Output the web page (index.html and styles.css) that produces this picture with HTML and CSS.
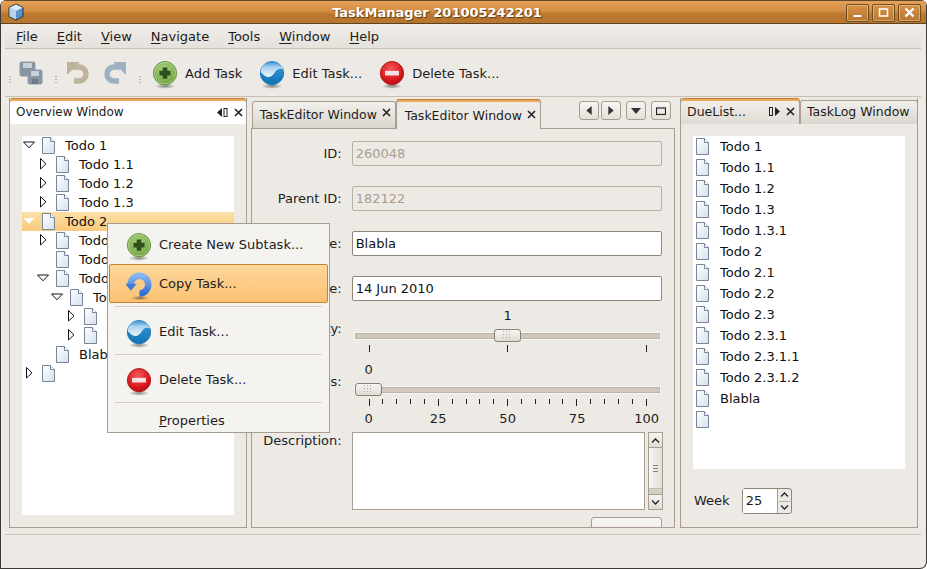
FILE: index.html
```html
<!DOCTYPE html>
<html lang="en">
<head>
<meta charset="utf-8">
<title>TaskManager 201005242201</title>
<link rel="stylesheet" href="styles.css">
</head>
<body>
<svg class="defs" aria-hidden="true">
  <defs>
    <radialGradient id="gGreen" cx="0.45" cy="0.35" r="0.75"><stop offset="0" stop-color="#a9d080"/><stop offset="0.6" stop-color="#86b455"/><stop offset="1" stop-color="#5b8f33"/></radialGradient>
    <radialGradient id="gRed" cx="0.45" cy="0.3" r="0.8"><stop offset="0" stop-color="#f2595b"/><stop offset="0.6" stop-color="#dc1a1e"/><stop offset="1" stop-color="#a50d10"/></radialGradient>
    <linearGradient id="gBlue" x1="0" y1="0" x2="0" y2="1"><stop offset="0" stop-color="#3d97d8"/><stop offset="0.35" stop-color="#a9d0ee"/><stop offset="1" stop-color="#f0f6fb"/></linearGradient>
    <linearGradient id="gBlueBase" x1="0" y1="0" x2="0" y2="1"><stop offset="0" stop-color="#3f9bd8"/><stop offset="1" stop-color="#0d73b4"/></linearGradient>
    <radialGradient id="gShadow"><stop offset="0" stop-color="#000" stop-opacity=".45"/><stop offset="1" stop-color="#000" stop-opacity="0"/></radialGradient>
    <linearGradient id="gDoc" x1="0" y1="0" x2="1" y2="1"><stop offset="0" stop-color="#fff"/><stop offset="1" stop-color="#d5e0ee"/></linearGradient>
    <linearGradient id="gCopy" x1="0" y1="0" x2="0" y2="1"><stop offset="0" stop-color="#86b6f0"/><stop offset="1" stop-color="#2f6fd6"/></linearGradient>
    <symbol id="i-add" viewBox="0 0 28 32">
      <ellipse cx="14" cy="28" rx="11" ry="3" fill="url(#gShadow)"/>
      <circle cx="14" cy="14" r="12.5" fill="url(#gGreen)" stroke="#5f8f3b"/>
      <circle cx="14" cy="14" r="11.4" fill="none" stroke="#c4e0a4" stroke-opacity=".7"/>
      <path d="M11.5 8h5v3.5H20v5h-3.5V20h-5v-3.5H8v-5h3.5z" fill="#2f4f1c"/>
    </symbol>
    <symbol id="i-edit" viewBox="0 0 28 32">
      <ellipse cx="14" cy="28" rx="11" ry="3" fill="url(#gShadow)"/>
      <circle cx="14" cy="14" r="12.5" fill="url(#gBlueBase)" stroke="#1676b5"/>
      <path d="M2 13C2 6 7.500 2 14 2c6 0 11 3.500 12 8-3.500-1.500-6.500-.5-8.500 2.500C15 16.500 12 19 8.500 18 5.500 17 4 14.500 2 13z" fill="url(#gBlue)"/>
    </symbol>
    <symbol id="i-del" viewBox="0 0 28 32">
      <ellipse cx="14" cy="28" rx="11" ry="3" fill="url(#gShadow)"/>
      <circle cx="14" cy="14" r="12.5" fill="url(#gRed)" stroke="#a81417"/>
      <rect x="6.5" y="11.5" width="15" height="5" fill="#f6e2e2"/>
    </symbol>
    <symbol id="i-copy" viewBox="0 0 28 32">
      <ellipse cx="15" cy="29" rx="10" ry="2.5" fill="url(#gShadow)"/>
      <path d="M5 14.500A9.500 9.500 0 1 1 14.500 24" fill="none" stroke="url(#gCopy)" stroke-width="7"/>
      <path d="M-1 13.500h12.500L5.200 21z" fill="#3c7cdc"/>
    </symbol>
    <symbol id="i-doc" viewBox="0 0 13 17">
      <path d="M.5.500H8.500L12.500 4.500V16.500H.5z" fill="url(#gDoc)" stroke="#76859a"/>
      <path d="M8.500.500V4.500H12.500" fill="#fff" stroke="#76859a"/>
    </symbol>
    <symbol id="a-down" viewBox="0 0 20 19">
      <path d="M1.500 6H12.500L7 11.800z" fill="#fff" stroke="#111"/>
    </symbol>
    <symbol id="a-down-w" viewBox="0 0 20 19">
      <path d="M1.500 6H12.500L7 11.800z" fill="#fff"/>
    </symbol>
    <symbol id="a-right" viewBox="0 0 20 19">
      <path d="M4.500 3.500V14L10 8.800z" fill="#fff" stroke="#111"/>
    </symbol>
  </defs>
</svg>

<div class="window">
  <header class="titlebar">
    <svg class="appicon" viewBox="0 0 16 18"><path d="M8 1l7 3.500v9L8 17l-7-3.500v-9z" fill="#5f93cc" stroke="#26303a"/><path d="M1.500 4.800L8 8l6.500-3.200L8 1.600z" fill="#dbe9f7"/><path d="M8 8v8.500l-6.500-3.300V4.800z" fill="#b8d3ee"/></svg>
    <span class="title">TaskManager 201005242201</span>
    <div class="wm-buttons">
      <span class="wm-btn"><svg viewBox="0 0 21 16"><rect x="6.500" y="10" width="8" height="2" fill="#fff"/></svg></span>
      <span class="wm-btn"><svg viewBox="0 0 21 16"><rect x="6.500" y="4" width="8" height="7" fill="none" stroke="#fff" stroke-width="1.500"/></svg></span>
      <span class="wm-btn"><svg viewBox="0 0 21 16"><path d="M6.500 3.500l8 8M14.500 3.500l-8 8" stroke="#fff" stroke-width="2.400"/></svg></span>
    </div>
  </header>

  <nav class="menubar">
    <span><u>F</u>ile</span><span><u>E</u>dit</span><span><u>V</u>iew</span><span><u>N</u>avigate</span><span><u>T</u>ools</span><span><u>W</u>indow</span><span><u>H</u>elp</span>
  </nav>

  <div class="toolbar">
    <i class="grip"></i>
    <svg class="tool-save" viewBox="0 0 24 24"><g fill="#8795a3" stroke="#8b98a5"><rect x="1" y="1" width="15" height="14" rx="1.500"/><rect x="9" y="9" width="14" height="14" rx="1.500"/></g><rect x="4" y="2" width="9" height="5" fill="#c9d0d7"/><rect x="12" y="10" width="8" height="5" fill="#c9d0d7"/><rect x="13" y="18" width="6" height="5" fill="#6d7a86"/></svg>
    <i class="grip"></i>
    <svg class="tool-hist" viewBox="0 0 24 24"><path d="M6 6h7a7 7 0 0 1 0 14H8" fill="none" stroke="#bfb29f" stroke-width="5.500"/><path d="M1 1h13L1 14z" fill="#bfb29f"/></svg>
    <svg class="tool-hist tool-redo" viewBox="0 0 24 24"><path d="M18 6h-7a7 7 0 0 0 0 14h5" fill="none" stroke="#9db1c0" stroke-width="5.500"/><path d="M23 1H10l13 13z" fill="#9db1c0"/></svg>
    <i class="grip"></i>
    <div class="tool t-add"><svg class="ic"><use href="#i-add"/></svg><span>Add Task</span></div>
    <div class="tool t-edit"><svg class="ic"><use href="#i-edit"/></svg><span>Edit Task...</span></div>
    <div class="tool t-del"><svg class="ic"><use href="#i-del"/></svg><span>Delete Task...</span></div>
  </div>

  <main class="workspace">
    <section class="panel panel-left">
      <div class="view-head">
        <span>Overview Window</span>
        <svg class="mini" viewBox="0 0 11 9"><path d="M0 4.500L5 0v9z" fill="#222"/><rect x="7" y=".5" width="3" height="8" fill="none" stroke="#222"/></svg>
        <svg class="mini-x" viewBox="0 0 9 9"><path d="M1 1l7 7M8 1l-7 7" stroke="#222" stroke-width="1.600"/></svg>
      </div>
      <div class="tree">
        <div class="node l0"><svg class="arrow"><use href="#a-down"/></svg><svg class="doc"><use href="#i-doc"/></svg><span>Todo 1</span></div>
        <div class="node l1"><svg class="arrow"><use href="#a-right"/></svg><svg class="doc"><use href="#i-doc"/></svg><span>Todo 1.1</span></div>
        <div class="node l1"><svg class="arrow"><use href="#a-right"/></svg><svg class="doc"><use href="#i-doc"/></svg><span>Todo 1.2</span></div>
        <div class="node l1"><svg class="arrow"><use href="#a-right"/></svg><svg class="doc"><use href="#i-doc"/></svg><span>Todo 1.3</span></div>
        <div class="node l0 selected"><svg class="arrow"><use href="#a-down-w"/></svg><svg class="doc"><use href="#i-doc"/></svg><span>Todo 2</span></div>
        <div class="node l1"><svg class="arrow"><use href="#a-right"/></svg><svg class="doc"><use href="#i-doc"/></svg><span>Todo 2.1</span></div>
        <div class="node l1"><span class="arrow"></span><svg class="doc"><use href="#i-doc"/></svg><span>Todo 2.2</span></div>
        <div class="node l1"><svg class="arrow"><use href="#a-down"/></svg><svg class="doc"><use href="#i-doc"/></svg><span>Todo 2.3</span></div>
        <div class="node l2"><svg class="arrow"><use href="#a-down"/></svg><svg class="doc"><use href="#i-doc"/></svg><span>Todo 2.3.1</span></div>
        <div class="node l3"><svg class="arrow"><use href="#a-right"/></svg><svg class="doc"><use href="#i-doc"/></svg><span>Todo 2.3.1.1</span></div>
        <div class="node l3"><svg class="arrow"><use href="#a-right"/></svg><svg class="doc"><use href="#i-doc"/></svg><span>Todo 2.3.1.2</span></div>
        <div class="node l1"><span class="arrow"></span><svg class="doc"><use href="#i-doc"/></svg><span>Blabla</span></div>
        <div class="node l0"><svg class="arrow"><use href="#a-right"/></svg><svg class="doc"><use href="#i-doc"/></svg></div>
      </div>
    </section>

    <section class="panel-mid">
      <div class="tabbar">
        <div class="tab">TaskEditor Window<svg class="mini-x" viewBox="0 0 9 9"><path d="M1 1l7 7M8 1l-7 7" stroke="#222" stroke-width="1.600"/></svg></div>
        <div class="tab active">TaskEditor Window<svg class="mini-x" viewBox="0 0 9 9"><path d="M1 1l7 7M8 1l-7 7" stroke="#222" stroke-width="1.600"/></svg></div>
        <div class="tab-tools">
          <span class="tbtn"><svg viewBox="0 0 8 10"><path d="M7 0v10L1 5z" fill="#333"/></svg></span>
          <span class="tbtn"><svg viewBox="0 0 8 10"><path d="M1 0v10l6-5z" fill="#333"/></svg></span>
          <span class="tbtn gap"><svg viewBox="0 0 10 8"><path d="M0 1h10L5 7z" fill="#333"/></svg></span>
          <span class="tbtn gap"><svg viewBox="0 0 10 8"><rect x=".5" y="1" width="9" height="6.500" fill="none" stroke="#222" stroke-width="1.200"/></svg></span>
        </div>
      </div>
      <div class="editor">
        <div class="frow r-id"><label>ID:</label><div class="field off">260048</div></div>
        <div class="frow r-parent"><label>Parent ID:</label><div class="field off">182122</div></div>
        <div class="frow r-name"><label>Name:</label><div class="field">Blabla</div></div>
        <div class="frow r-date"><label>Due Date:</label><div class="field">14 Jun 2010</div></div>
        <div class="frow r-slider">
          <label>Priority:</label>
          <div class="slider">
            <div class="val v-mid">1</div>
            <div class="track t-prio"><span class="thumb"></span></div>
            <div class="ticks"><i class="maj"></i><i class="maj"></i><i class="maj"></i></div>
          </div>
        </div>
        <div class="frow r-slider r-prog">
          <label>Progress:</label>
          <div class="slider">
            <div class="val v-start">0</div>
            <div class="track t-prog"><span class="thumb"></span></div>
            <div class="ticks">
              <i class="maj"></i><i></i><i></i><i></i><i></i><i class="maj"></i><i></i><i></i><i></i><i></i><i class="maj"></i><i></i><i></i><i></i><i></i><i class="maj"></i><i></i><i></i><i></i><i></i><i class="maj"></i>
            </div>
            <div class="scale"><span>0</span><span>25</span><span>50</span><span>75</span><span>100</span></div>
          </div>
        </div>
        <div class="frow r-desc">
          <label>Description:</label>
          <div class="textarea">
            <div class="text-body"></div>
            <div class="scrollbar">
              <span class="sb-btn"><svg viewBox="0 0 9 5"><path d="M1 4.500L4.500 1 8 4.500" fill="none" stroke="#222" stroke-width="1.300"/></svg></span>
              <span class="sb-thumb"><i></i><i></i><i></i></span>
              <span class="sb-rest"></span>
              <span class="sb-btn"><svg viewBox="0 0 9 5"><path d="M1 .5L4.500 4 8 .5" fill="none" stroke="#222" stroke-width="1.300"/></svg></span>
            </div>
          </div>
        </div>
        <div class="ok-row"><button class="ok">OK</button></div>
      </div>
    </section>

    <section class="panel panel-right">
      <div class="rtabs">
        <div class="rtab active">
          <span>DueList...</span>
          <svg class="mini" viewBox="0 0 11 9"><rect x=".5" y=".5" width="3" height="8" fill="none" stroke="#222"/><path d="M11 4.500L6 0v9z" fill="#222"/></svg>
          <svg class="mini-x" viewBox="0 0 9 9"><path d="M1 1l7 7M8 1l-7 7" stroke="#222" stroke-width="1.600"/></svg>
        </div>
        <div class="rtab">TaskLog Window</div>
      </div>
      <div class="duelist">
        <div class="item"><svg class="doc"><use href="#i-doc"/></svg><span>Todo 1</span></div>
        <div class="item"><svg class="doc"><use href="#i-doc"/></svg><span>Todo 1.1</span></div>
        <div class="item"><svg class="doc"><use href="#i-doc"/></svg><span>Todo 1.2</span></div>
        <div class="item"><svg class="doc"><use href="#i-doc"/></svg><span>Todo 1.3</span></div>
        <div class="item"><svg class="doc"><use href="#i-doc"/></svg><span>Todo 1.3.1</span></div>
        <div class="item"><svg class="doc"><use href="#i-doc"/></svg><span>Todo 2</span></div>
        <div class="item"><svg class="doc"><use href="#i-doc"/></svg><span>Todo 2.1</span></div>
        <div class="item"><svg class="doc"><use href="#i-doc"/></svg><span>Todo 2.2</span></div>
        <div class="item"><svg class="doc"><use href="#i-doc"/></svg><span>Todo 2.3</span></div>
        <div class="item"><svg class="doc"><use href="#i-doc"/></svg><span>Todo 2.3.1</span></div>
        <div class="item"><svg class="doc"><use href="#i-doc"/></svg><span>Todo 2.3.1.1</span></div>
        <div class="item"><svg class="doc"><use href="#i-doc"/></svg><span>Todo 2.3.1.2</span></div>
        <div class="item"><svg class="doc"><use href="#i-doc"/></svg><span>Blabla</span></div>
        <div class="item"><svg class="doc"><use href="#i-doc"/></svg></div>
      </div>
      <div class="week">
        <span>Week</span>
        <div class="spin">
          <span class="spin-val">25</span>
          <span class="spin-btns">
            <span class="spin-btn"><svg viewBox="0 0 9 5"><path d="M1 4.500L4.500 1 8 4.500" fill="none" stroke="#222" stroke-width="1.300"/></svg></span>
            <span class="spin-btn"><svg viewBox="0 0 9 5"><path d="M1 .5L4.500 4 8 .5" fill="none" stroke="#222" stroke-width="1.300"/></svg></span>
          </span>
        </div>
      </div>
    </section>

    <div class="popup">
      <div class="pitem first"><svg class="ic"><use href="#i-add"/></svg><span>Create New Subtask...</span></div>
      <div class="pitem hot"><svg class="ic"><use href="#i-copy"/></svg><span>Copy Task...</span></div>
      <hr>
      <div class="pitem"><svg class="ic"><use href="#i-edit"/></svg><span class="lift">Edit Task...</span></div>
      <hr>
      <div class="pitem"><svg class="ic"><use href="#i-del"/></svg><span class="lift">Delete Task...</span></div>
      <hr>
      <div class="pitem plain"><span><u>P</u>roperties</span></div>
    </div>
  </main>

  <footer class="statusbar"></footer>
</div>
</body>
</html>
```

FILE: styles.css
```css
* { box-sizing: border-box; }
html, body { margin: 0; padding: 0; }
body {
  width: 927px;
  height: 569px;
  overflow: hidden;
  background: #fff;
  font-family: "DejaVu Sans", sans-serif;
  font-size: 13px;
  color: #1c1c1c;
}
.defs { display: block; width: 0; height: 0; }

.window {
  width: 927px;
  height: 569px;
  display: flex;
  flex-direction: column;
  background: #edeae5;
  border: 1px solid #3d3a35;
  border-top: 0;
  border-radius: 6px 6px 7px 0;
  overflow: hidden;
  position: relative;
}

/* title bar */
.titlebar {
  flex: 0 0 24px;
  display: flex;
  align-items: center;
  position: relative;
  border-top: 1px solid #5f4a2e;
  border-bottom: 1px solid #5d4320;
  background: linear-gradient(#e5a158 0, #d68f43 45%, #b9772f 60%, #b87630 100%);
  padding-left: 7px;
}
.appicon { width: 16px; height: 18px; display: block; }
.title {
  flex: 1;
  text-align: center;
  color: #fff;
  font-weight: bold;
  font-size: 13px;
  text-shadow: 1px 1px 1px #5a3b14;
  margin-left: 81px;
  margin-right: 77px;
}
.wm-buttons { display: flex; gap: 3px; padding-right: 5px; margin-top: 1px; }
.wm-btn {
  width: 23px;
  height: 18px;
  border: 1px solid #6e4e22;
  border-radius: 2px;
  box-shadow: inset 0 0 0 1px rgba(255, 225, 180, .45);
  background: linear-gradient(#d79247, #b9762f);
  display: block;
}
.wm-btn svg { display: block; width: 21px; height: 16px; }

/* menu */
.menubar {
  flex: 0 0 25px;
  display: flex;
  align-items: center;
  gap: 19px;
  padding: 1px 0 0 11px;
  margin: 0 5px 0 4px;
  background: linear-gradient(#f0ede9, #e5e1db);
  border-bottom: 1px solid #c9bfb3;
}
.menubar u { text-underline-offset: 2px; }

/* toolbar */
.toolbar {
  flex: 0 0 48px;
  display: flex;
  align-items: center;
  padding-left: 4px;
  margin: 0 5px 0 4px;
  border-bottom: 1px solid #c9bfb3;
}
.grip {
  width: 2px;
  height: 8px;
  margin-top: 14px;
  background: repeating-linear-gradient(#b9b2a7 0 1px, transparent 1px 3px);
  display: block;
}
.tool-save { width: 24px; height: 24px; margin: 0 12px 0 8px; }
.tool-hist { width: 24px; height: 24px; margin-left: 9px; }
.tool-redo { margin: 0 12px 0 13px; }
.tool { display: flex; align-items: center; gap: 7px; }
.tool span { margin-top: 2px; }
.ic { width: 26px; height: 30px; display: block; margin-top: 4px; overflow: visible; }
.t-add { margin-left: 11px; }
.t-edit { margin-left: 17px; }
.t-del { margin-left: 17px; }

/* workspace */
.workspace {
  flex: 0 0 431px;
  position: relative;
  display: flex;
  padding: 1px 8px 0 8px;
}
.panel { border: 1px solid #a89d90; height: 430px; }
.panel-left { width: 238px; border-top: 0; }
.view-head {
  height: 26px;
  display: flex;
  align-items: center;
  border-top: 1px solid #bd7f3a;
  box-shadow: inset 0 2px 0 #eea95c;
  border-radius: 3px 3px 0 0;
  background: #fff;
  padding: 1px 3px 0 6px;
  font-size: 12px;
}
.view-head span { flex: 1; }
.mini { width: 11px; height: 9px; display: block; flex: none; }
.mini-x { width: 9px; height: 9px; display: block; flex: none; }
.view-head .mini-x { margin-left: 6px; }

.tree {
  width: 212px;
  height: 379px;
  margin: 12px 0 0 12px;
  background: #fff;
  overflow: hidden;
}
.node { height: 19px; display: flex; align-items: center; color: #111; white-space: nowrap; }
.node.l1 { padding-left: 14px; }
.node.l2 { padding-left: 28px; }
.node.l3 { padding-left: 42px; }
.arrow { width: 20px; height: 19px; display: block; flex: none; }
.doc { width: 13px; height: 17px; display: block; flex: none; margin-right: 10px; }
.selected { background: linear-gradient(#fddfa6, #f9ca7c); }

/* centre */
.panel-mid { width: 425px; margin-left: 4px; height: 430px; display: flex; flex-direction: column; overflow: hidden; }
.tabbar { height: 30px; display: flex; align-items: flex-end; padding-left: 1px; flex: none; }
.tab {
  width: 144px;
  height: 27px;
  display: flex;
  align-items: center;
  justify-content: space-between;
  padding: 0 4px 2px 7px;
  border: 1px solid #a89d90;
  border-bottom: 0;
  border-radius: 3px 3px 0 0;
  background: linear-gradient(#f2f0ec, #dad6cf);
  white-space: nowrap;
  font-size: 12.500px;
}
.tab .mini-x { margin: -3px 0 0 4px; }
.tab.active {
  width: 145px;
  height: 30px;
  background: #edeae5;
  border-top: 1px solid #bd7f3a;
  box-shadow: inset 0 2px 0 #eea95c;
  border-right: 1px solid #a89d90;
  margin-bottom: -1px;
  padding: 2px 4px 0 8px;
  position: relative;
}
.tab-tools { display: flex; align-self: flex-start; gap: 2px; margin: 3px 0 0 38px; }
.tbtn {
  width: 20px;
  height: 19px;
  display: flex;
  align-items: center;
  justify-content: center;
  border: 1px solid #a89d90;
  border-radius: 3px;
  background: linear-gradient(#f7f5f2, #e4e0da);
}
.tbtn.gap { margin-left: 3px; }
.tbtn svg { width: 8px; height: 9px; display: block; }
.tbtn.gap svg { width: 10px; height: 8px; }

.editor {
  flex: 1;
  border: 1px solid #a89d90;
  min-height: 0;
  overflow: hidden;
  padding-top: 12px;
}
.frow { display: flex; align-items: center; }
.frow > label { width: 90px; text-align: right; margin-right: 10px; flex: none; color: #222; }
.field {
  width: 310px;
  height: 25px;
  border: 1px solid #8f8578;
  border-radius: 2px;
  background: #fff;
  padding: 0 3px;
  line-height: 23px;
  color: #111;
}
.field.off { background: #edeae5; color: #a99e90; border-color: #b9b0a3; }
.r-parent { margin-top: 20px; }
.r-name { margin-top: 20px; }
.r-date { margin-top: 20px; }

.r-slider { align-items: flex-start; }
.r-slider > label { margin-top: 20px; }
.r-prog > label { margin-top: 19px; }
.slider { width: 310px; }
.val { height: 15px; line-height: 15px; font-size: 13px; text-align: center; margin-top: 7px; }
.v-mid { padding-left: 2px; }
.v-start { width: 34px; }
.track {
  height: 6px;
  margin: 10px 2px 0 3px;
  background: #d1c8bd;
  border: 1px solid #bdb3a6;
  outline: 1px solid #f9f7f4;
  position: relative;
}
.thumb {
  position: absolute;
  top: -5px;
  width: 27px;
  height: 13px;
  border: 1px solid #8a8074;
  border-radius: 3px;
  background: linear-gradient(#f8f6f3, #dfdad3);
  display: flex;
  align-items: center;
  justify-content: center;
}
.thumb::after {
  content: "";
  width: 9px;
  height: 9px;
  background: linear-gradient(#b0a89c 1px, transparent 1px) 0 0/3px 3px;
  mask: linear-gradient(90deg, #000 1px, transparent 1px) 0 0/3px 3px;
}
.t-prio .thumb { left: 138px; }
.t-prog .thumb { left: -1px; }
.ticks { display: flex; justify-content: space-between; width: 278px; margin: 6px 0 0 17px; height: 8px; }
.ticks i { display: block; width: 1px; height: 5px; background: #222; }
.ticks i.maj { height: 7px; }
.scale { display: flex; justify-content: space-between; width: 308px; margin: 4px 0 0 2px; line-height: 15px; }
.scale span { width: 30px; text-align: center; }
.r-prog { margin-top: 2px; }
.r-desc { margin-top: 6px; align-items: flex-start; }
.r-desc > label { margin-top: 1px; }

.textarea { width: 311px; height: 78px; display: flex; gap: 3px; }
.text-body { flex: 1; background: #fff; border: 1px solid #a89d90; }
.scrollbar { width: 15px; display: flex; flex-direction: column; border: 1px solid #a89d90; background: #d6cfc6; }
.sb-btn { height: 15px; background: linear-gradient(#f7f5f2, #e0dcd5); display: flex; align-items: center; justify-content: center; border-bottom: 1px solid #a89d90; flex: none; }
.sb-btn:last-child { border-top: 1px solid #a89d90; border-bottom: 0; }
.sb-btn svg { width: 9px; height: 5px; display: block; }
.sb-thumb { height: 41px; background: linear-gradient(90deg, #f8f6f3, #e3dfd9); display: flex; flex-direction: column; gap: 2px; align-items: center; justify-content: center; border-bottom: 1px solid #c4bbaf; }
.sb-thumb i { display: block; width: 5px; height: 1px; background: #8a8074; }
.sb-rest { flex: 1; }

.ok-row { display: flex; justify-content: flex-end; padding-right: 12px; margin-top: 7px; }
.ok {
  width: 71px;
  height: 34px;
  font: inherit;
  color: #111;
  border: 1px solid #a89d90;
  border-radius: 3px;
  background: linear-gradient(#f8f6f3, #e6e2dc);
  padding: 0;
}

/* right */
.panel-right { width: 238px; margin-left: 5px; border-top: 0; display: flex; flex-direction: column; }
.rtabs { height: 26px; display: flex; flex: none; font-size: 12.500px; }
.rtab { flex: 0 0 118px; height: 24px; margin-top: 2px; display: flex; align-items: center; padding: 0 0 2px 6px; border: 1px solid #a89d90; border-bottom: 0; border-radius: 3px 3px 0 0; background: linear-gradient(#f2f0ec, #dad6cf); white-space: nowrap; }
.rtab.active { flex-basis: 119px; height: 26px; margin-top: 0; padding: 0 4px 0 6px; border: 0; border-top: 1px solid #bd7f3a; box-shadow: inset 0 2px 0 #eea95c; border-right: 1px solid #a89d90; background: linear-gradient(#f3f1ed, #dfdbd4); }
.rtab.active span { flex: 1; }
.rtab.active .mini-x { margin-left: 6px; }
.duelist { width: 212px; height: 333px; margin: 12px 0 0 12px; background: #fff; flex: none; }
.item { height: 21px; display: flex; align-items: center; padding-left: 3px; color: #111; }
.item .doc { margin-right: 11px; }
.week { display: flex; align-items: center; margin: 19px 0 0 13px; gap: 12px; }
.week > span { margin-top: -1px; }
.spin { width: 50px; height: 26px; display: flex; border: 1px solid #8f8578; border-radius: 3px; background: #edeae5; }
.spin-val { width: 35px; background: #fff; border-right: 1px solid #a89d90; line-height: 24px; padding-left: 3px; }
.spin-btns { flex: 1; display: flex; flex-direction: column; }
.spin-btn { flex: 1; display: flex; align-items: center; justify-content: center; }
.spin-btn:first-child { border-bottom: 1px solid #b9b0a3; margin: 0 1px; }
.spin-btn svg { width: 9px; height: 5px; display: block; }

/* popup */
.popup {
  position: absolute;
  left: 106px;
  top: 126px;
  width: 223px;
  height: 210px;
  background: #f5f3f0;
  border: 1px solid #a89d90;
  padding: 1px;
  z-index: 3;
  display: flex;
  flex-direction: column;
}
.pitem { height: 38px; display: flex; align-items: center; gap: 7px; padding-left: 17px; flex: none; }
.pitem.first { height: 39px; }
.pitem.hot { background: linear-gradient(#fdd79b, #fcc172); border: 1px solid #c8822f; border-radius: 2px; padding-left: 16px; height: 39px; }
.pitem.plain { height: 22px; padding-left: 50px; }
.lift { margin-top: -2px; }
.popup hr { margin: 3px 0 6px 6px; border: 0; height: 1px; background: #d6cfc3; flex: none; width: 207px; }

/* status */
.statusbar { flex: 1; margin: 6px 5px 0 4px; border-top: 1px solid #c9bfb3; }
```
